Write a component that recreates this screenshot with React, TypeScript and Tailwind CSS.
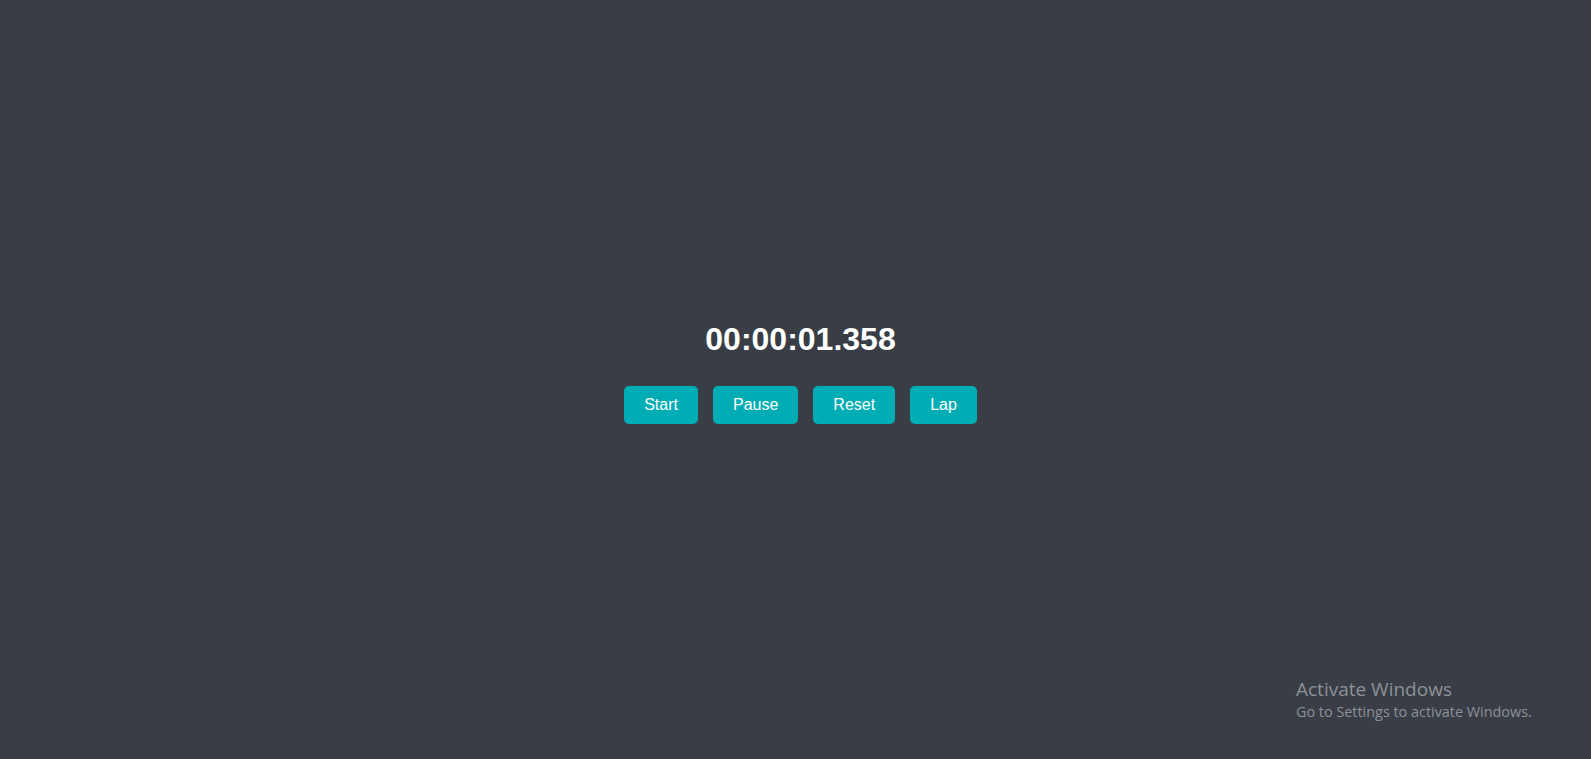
export default function App() {
  const buttons = ["Start", "Pause", "Reset", "Lap"];

  return (
    <div className="relative h-screen w-full overflow-hidden bg-[#393e46] font-['Liberation_Sans',Arial,sans-serif]">
      <div className="flex h-full flex-col items-center justify-center pb-[14px] pl-[10px]">
        <h1 className="text-[32px] font-bold leading-[37px] text-white">00:00:01.358</h1>
        <div className="mt-[28px] flex gap-[15px]">
          {buttons.map((label) => (
            <button
              key={label}
              type="button"
              className="rounded-[5px] bg-[#00adb5] px-5 py-[10px] text-base leading-[18px] text-white"
            >
              {label}
            </button>
          ))}
        </div>
      </div>

      <div className="absolute left-[1296px] top-[677px] font-['Open_Sans','Noto_Sans',sans-serif] text-[#8c9097]">
        <div className="text-[19px] leading-[24px]">Activate Windows</div>
        <div className="text-[14.4px] leading-[21px]">Go to Settings to activate Windows.</div>
      </div>
    </div>
  );
}
